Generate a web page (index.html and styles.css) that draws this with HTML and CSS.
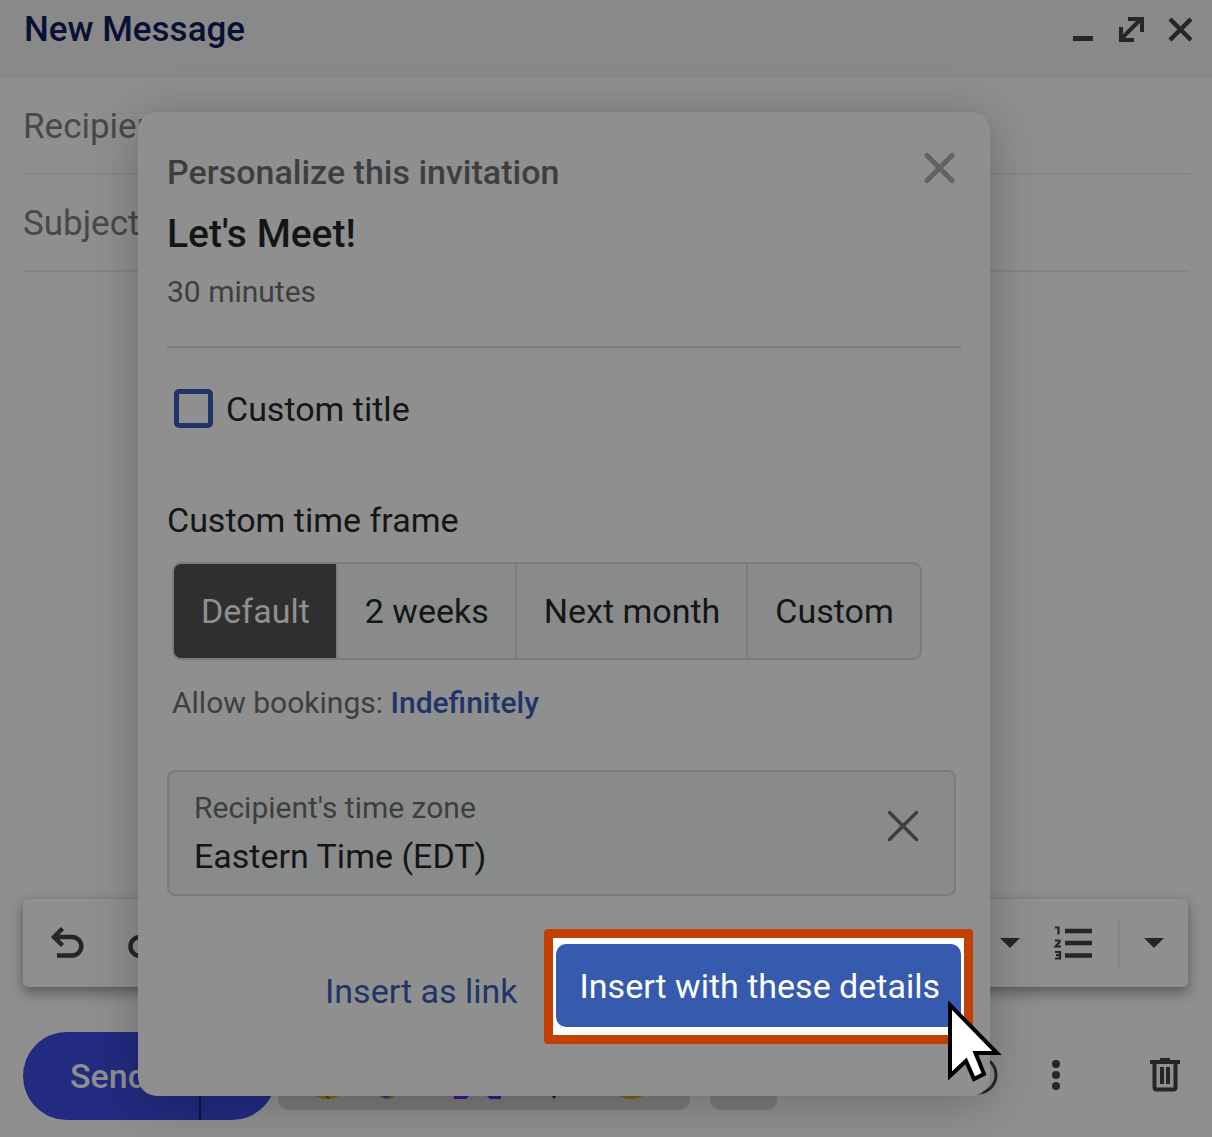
FILE: index.html
```html
<!DOCTYPE html>
<html lang="en">
<head>
<meta charset="utf-8">
<meta name="viewport" content="width=device-width, initial-scale=1">
<title>New Message</title>
<link rel="stylesheet" href="styles.css">
</head>
<body>
<main class="compose">
  <header class="compose-header">
    <h1 class="compose-title">New Message</h1>
    <div class="window-controls">
      <button class="icon-button" type="button" aria-label="Minimize">
        <svg width="28" height="28" viewBox="0 0 28 28"><path d="M5 21h20v5h-20z" fill="currentColor"/></svg>
      </button>
      <button class="icon-button" type="button" aria-label="Full screen">
        <svg width="28" height="28" viewBox="0 0 28 28" fill="none" stroke="currentColor" stroke-width="4"><path d="M4 24 24 4M11 4H25V17M4 12V25H17"/></svg>
      </button>
      <button class="icon-button" type="button" aria-label="Close">
        <svg width="28" height="28" viewBox="0 0 28 28" fill="none" stroke="currentColor" stroke-width="4.500"><path d="M4 4 25 25M25 4 4 25"/></svg>
      </button>
    </div>
  </header>

  <div class="fields">
    <input class="field" type="text" placeholder="Recipients" aria-label="Recipients">
    <input class="field" type="text" placeholder="Subject" aria-label="Subject">
  </div>

  <textarea class="message" aria-label="Message body"></textarea>

  <div class="format-bar">
    <button class="icon-button" type="button" aria-label="Undo">
      <svg width="36" height="36" viewBox="0 0 36 36" fill="none" stroke="currentColor" stroke-width="4.500"><path d="M12.500 3.500 4 12 12.500 20.500M4 12H22a9 9 0 0 1 0 18.500H7"/></svg>
    </button>
    <button class="icon-button redo" type="button" aria-label="Redo">
      <svg width="36" height="36" viewBox="0 0 36 36" fill="none" stroke="currentColor" stroke-width="4.500"><path d="M23 3.500 31.500 12 23 20.500M31.500 12H12a9 9 0 0 0 0 19H27"/></svg>
    </button>
    <div class="format-end">
      <button class="icon-button" type="button" aria-label="Alignment options">
        <svg width="20" height="12" viewBox="0 0 20 12"><path d="M0 1h20l-10 10z" fill="currentColor"/></svg>
      </button>
      <button class="icon-button numbered" type="button" aria-label="Numbered list">
        <svg width="38" height="36" viewBox="0 0 38 36" fill="none" stroke="currentColor"><path d="M11 6H38M11 18H38M11 30.500H38" stroke-width="4.500"/><path d="M1 2.500H4.500V9.500M1 15.500H5.500V17L1.500 21.500H7M1 27H6V33.500H1M2 30.200H6" stroke-width="2.200"/></svg>
      </button>
      <span class="format-divider"></span>
      <button class="icon-button" type="button" aria-label="More formatting">
        <svg width="20" height="12" viewBox="0 0 20 12"><path d="M0 1h20l-10 10z" fill="currentColor"/></svg>
      </button>
    </div>
  </div>

  <footer class="actions">
    <div class="send-group">
      <button class="send" type="button">Send</button>
      <button class="send-more" type="button" aria-label="Send options"></button>
    </div>
    <div class="reactions">
      <svg width="412" height="68" viewBox="-1 1 412 68">
        <circle cx="48" cy="34" r="24" fill="#806300"/><path d="M46 53 50 58" stroke="#5c3a00" stroke-width="2"/>
        <path d="M98 48H126L113 57Q107 60 101 56Z" fill="#806300"/><path d="M101 52H115L109 57H105Z" fill="#3a2a99"/>
        <path d="M175 34H191V54L187 58H175ZM206 34H222V58H211L207 54Z" fill="#44128c"/>
        <path d="M263 44H287L275 58Z" fill="#66062a"/>
        <circle cx="352" cy="34" r="24" fill="#855f00"/>
      </svg>
    </div>
    <div class="reaction-more"></div>
    <div class="actions-end">
      <button class="icon-button" type="button" aria-label="Schedule">
        <svg width="44" height="44" viewBox="0 0 44 44" fill="none" stroke="currentColor" stroke-width="3"><circle cx="22" cy="21" r="18"/></svg>
      </button>
      <button class="icon-button" type="button" aria-label="More options">
        <svg width="8" height="32" viewBox="0 0 8 32" fill="currentColor"><circle cx="4" cy="4" r="4"/><circle cx="4" cy="15" r="4"/><circle cx="4" cy="26" r="4"/></svg>
      </button>
      <button class="icon-button trash" type="button" aria-label="Discard draft">
        <svg width="30" height="36" viewBox="0 0 30 36" fill="none" stroke="currentColor"><path d="M0 4H30M10 2H20" stroke-width="4"/><path d="M4.500 4V29.500a2 2 0 0 0 2 2H23.500a2 2 0 0 0 2-2V4" stroke-width="4"/><path d="M12 9V26M18 9V26" stroke-width="4"/></svg>
      </button>
    </div>
  </footer>

  <section class="dialog" role="dialog" aria-labelledby="dialog-label">
    <header class="dialog-header">
      <div>
        <p class="dialog-label" id="dialog-label">Personalize this invitation</p>
        <h2 class="event-name">Let's Meet!</h2>
        <p class="duration">30 minutes</p>
      </div>
      <button class="dialog-close" type="button" aria-label="Close dialog">
        <svg width="32" height="32" viewBox="0 0 32 32" fill="none" stroke="currentColor" stroke-width="5" stroke-linecap="round"><path d="M4 3.500 29 28.500M29 3.500 4 28.500"/></svg>
      </button>
    </header>

    <div class="custom-title">
      <input class="checkbox" type="checkbox" id="custom-title">
      <label for="custom-title">Custom title</label>
    </div>

    <h3 class="section-label">Custom time frame</h3>
    <div class="segments">
      <button class="segment selected" type="button" aria-pressed="true">Default</button>
      <button class="segment" type="button">2 weeks</button>
      <button class="segment" type="button">Next month</button>
      <button class="segment" type="button">Custom</button>
    </div>
    <p class="bookings">Allow bookings: <a class="bookings-link" href="#">Indefinitely</a></p>

    <div class="time-zone">
      <div class="time-zone-text">
        <label class="time-zone-label" for="time-zone">Recipient's time zone</label>
        <input class="time-zone-value" id="time-zone" type="text" value="Eastern Time (EDT)">
      </div>
      <button class="time-zone-clear" type="button" aria-label="Clear time zone">
        <svg width="32" height="32" viewBox="0 0 32 32" fill="none" stroke="currentColor" stroke-width="3.500" stroke-linecap="round"><path d="M2.500 2.500 29.500 29.500M29.500 2.500 2.500 29.500"/></svg>
      </button>
    </div>

    <footer class="dialog-footer">
      <a class="insert-link" href="#">Insert as link</a>
      <div class="highlight">
        <button class="insert-button" type="button">Insert with these details</button>
        <svg class="cursor" width="54" height="82" viewBox="0 0 54 82"><path d="M2 4V75L18 60 26 78 36 73 27.500 52H49Z" fill="#fff" stroke="#000" stroke-width="4"/></svg>
      </div>
    </footer>
  </section>
</main>
</body>
</html>
```
FILE: styles.css
```css
* {
  box-sizing: border-box;
}

body {
  margin: 0;
  background: #8f8f8f;
  color: #141616;
  font-family: Roboto, "Liberation Sans", sans-serif;
  font-size: 34px;
  line-height: 40px;
}

h1, h2, h3, p {
  margin: 0;
  font-size: 34px;
  font-weight: 400;
}

button, input, textarea {
  margin: 0;
  padding: 0;
  border: 0;
  background: none;
  color: inherit;
  font: inherit;
}

svg {
  display: block;
}

a {
  color: #1f3568;
  text-decoration: none;
}

.compose {
  position: relative;
  display: flex;
  flex-direction: column;
  min-height: 100vh;
  overflow: hidden;
}

.compose-header {
  display: flex;
  align-items: flex-start;
  justify-content: space-between;
  padding: 9px 18px 27px 24px;
  background: #898989;
}

.compose-title {
  color: #0a1033;
  font-size: 35px;
  font-weight: 500;
  line-height: 42px;
}

.window-controls {
  display: flex;
  align-items: center;
  gap: 21px;
  height: 40px;
}

.icon-button {
  color: #252726;
}

.fields {
  display: flex;
  flex-direction: column;
  padding: 0 22px 0 23px;
}

.field {
  height: 97px;
  padding-top: 2px;
  border-bottom: 2px solid #848686;
  font-size: 35px;
  outline: 0;
}

.field::placeholder {
  color: #474949;
  opacity: 1;
}

.message {
  flex: 1;
  min-height: 200px;
  outline: 0;
  resize: none;
}

.format-bar {
  display: flex;
  align-items: center;
  height: 88px;
  margin: 0 24px 0 23px;
  padding: 0 24px 0 27px;
  border-radius: 5px;
  background: #8f8f8f;
  box-shadow: 0 6px 14px rgba(0, 0, 0, 0.35), 0 0 6px rgba(0, 0, 0, 0.08);
}

.redo {
  margin-left: 42px;
}

.format-end {
  display: flex;
  align-items: center;
  margin-left: auto;
}

.numbered {
  margin: 0 26px 0 34px;
}

.format-divider {
  width: 2px;
  height: 48px;
  margin-right: 24px;
  background: #868686;
}

.actions {
  display: flex;
  align-items: center;
  padding: 45px 32px 17px 23px;
}

.send-group {
  display: flex;
  width: 253px;
  height: 88px;
  overflow: hidden;
  border-radius: 44px;
  background: #222b80;
}

.send {
  width: 178px;
  padding-left: 47px;
  border-right: 2px solid #10153f;
  color: #8f8f8f;
  font-weight: 500;
  text-align: left;
}

.send-more {
  flex: 1;
}

.reactions {
  margin-left: 2px;
  border-radius: 10px;
  background: #7b7b7b;
}

.reaction-more {
  width: 67px;
  height: 68px;
  margin-left: 20px;
  border-radius: 10px;
  background: #7b7b7b;
}

.actions-end {
  display: flex;
  align-items: center;
  gap: 52px;
  margin-left: auto;
}

.trash {
  margin-left: 38px;
}

.dialog {
  position: absolute;
  top: 112px;
  right: 222px;
  left: 138px;
  padding: 40px 29px 52px;
  border-radius: 19px;
  background: #8f8f8f;
  box-shadow: 0 6px 50px rgba(0, 0, 0, 0.25);
}

.dialog-header {
  display: flex;
  align-items: flex-start;
  justify-content: space-between;
  padding-bottom: 36px;
  border-bottom: 2px solid #7b7c7e;
}

.dialog-label {
  color: #3d3f3f;
  font-weight: 500;
}

.event-name {
  margin: 18px 0 16px;
  font-size: 39px;
  font-weight: 500;
  line-height: 48px;
}

.duration {
  color: #3d3f3f;
  font-size: 30px;
  line-height: 36px;
}

.dialog-close {
  margin-right: 6px;
  color: #626262;
}

.custom-title {
  display: flex;
  align-items: center;
  gap: 13px;
  height: 39px;
  margin: 41px 0 72px 7px;
}

.checkbox {
  width: 39px;
  height: 39px;
  border: 5px solid #1f3568;
  border-radius: 5px;
  appearance: none;
}

.segments {
  display: flex;
  width: fit-content;
  height: 98px;
  margin: 22px 0 25px 5px;
  overflow: hidden;
  border: 2px solid #7b7c80;
  border-radius: 9px;
  background: #898b8a;
}

.segment {
  padding: 0 26px 0 27px;
}

.segment + .segment {
  border-left: 2px solid #7b7c80;
}

.selected {
  background: #2f2f2f;
  color: #8f8f8f;
}

.bookings {
  margin: 0 0 49px 5px;
  color: #3d3f3f;
  font-size: 30px;
  line-height: 36px;
}

.bookings-link {
  font-weight: 500;
}

.time-zone {
  display: flex;
  align-items: center;
  margin-right: 5px;
  padding: 18px 35px 18px 25px;
  border: 2px solid #7b7c80;
  border-radius: 8px;
  background: #898b8a;
}

.time-zone-text {
  display: flex;
  flex: 1;
  flex-direction: column;
  gap: 10px;
}

.time-zone-label {
  color: #3d3f3f;
  font-size: 30px;
  line-height: 36px;
}

.time-zone-value {
  width: 100%;
  height: 40px;
  outline: 0;
}

.time-zone-clear {
  margin-bottom: 14px;
  color: #3d3f3f;
}

.dialog-footer {
  display: flex;
  align-items: center;
  justify-content: flex-end;
  gap: 26px;
  margin: 33px -12px 0 0;
}

.insert-link {
  padding-top: 8px;
}

.highlight {
  position: relative;
  padding: 6px 3px 8px;
  border: 9px solid #c24100;
  border-radius: 4px;
  background: #fff;
}

.insert-button {
  display: block;
  height: 83px;
  padding: 0 21px 0 24px;
  border-radius: 10px;
  background: #365aae;
  color: #fff;
}

.cursor {
  position: absolute;
  right: -38px;
  bottom: -48px;
}
```
